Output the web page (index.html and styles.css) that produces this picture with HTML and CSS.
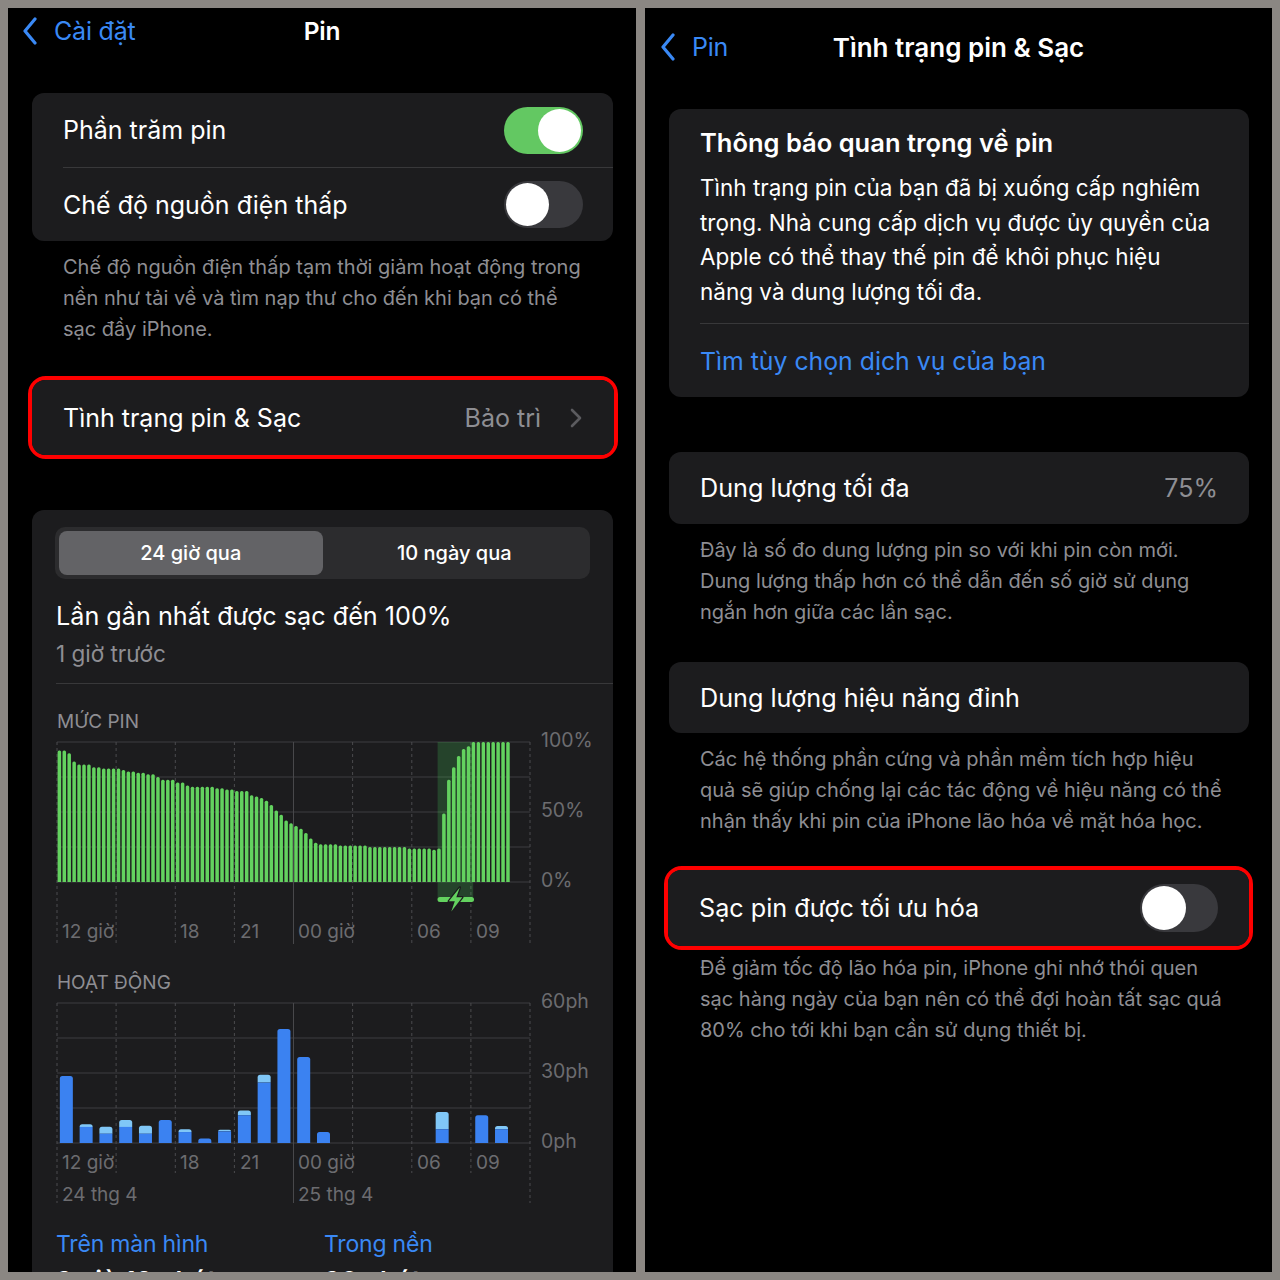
FILE: index.html
```html
<!DOCTYPE html>
<html lang="vi">
<head>
<meta charset="utf-8">
<title>Pin</title>
<link rel="stylesheet" href="styles.css">
</head>
<body>
<div class="frame">
  <section class="panel left">
    <header class="nav nav-left">
      <div class="back">
        <svg class="chev" viewBox="0 0 16 28" width="16" height="28"><path d="M13 2 L3 14 L13 26" /></svg>
        <span>Cài đặt</span>
      </div>
      <div class="title">Pin</div>
      <div></div>
    </header>

    <div class="card group1">
      <div class="row">
        <span class="label">Phần trăm pin</span>
        <span class="switch on"><span class="knob"></span></span>
      </div>
      <div class="sep inset"></div>
      <div class="row">
        <span class="label">Chế độ nguồn điện thấp</span>
        <span class="switch off"><span class="knob"></span></span>
      </div>
    </div>
    <p class="footer f-left">Chế độ nguồn điện thấp tạm thời giảm hoạt động trong<br>nền như tải về và tìm nạp thư cho đến khi bạn có thể<br>sạc đầy iPhone.</p>

    <div class="hl hl-left">
      <div class="card inner-card row link-row">
        <span class="label">Tình trạng pin &amp; Sạc</span>
        <span class="detail-wrap">
          <span class="detail">Bảo trì</span>
          <svg class="disclosure" viewBox="0 0 12 20" width="12" height="20"><path d="M2 2 L10 10 L2 18" /></svg>
        </span>
      </div>
    </div>

    <div class="card usage">
      <div class="seg">
        <div class="seg-item active">24 giờ qua</div>
        <div class="seg-item">10 ngày qua</div>
      </div>
      <div class="last">Lần gần nhất được sạc đến 100%</div>
      <div class="ago">1 giờ trước</div>
      <div class="sep usage-sep"></div>

      <div class="chart-title">MỨC PIN</div>
      <svg class="chart" id="level" width="581" height="219" viewBox="0 -7 581 219">
        <g class="hgrid">
          <line x1="25" y1="8" x2="498" y2="8"/>
          <line x1="25" y1="43" x2="498" y2="43"/>
          <line x1="25" y1="78" x2="498" y2="78"/>
          <line x1="25" y1="113" x2="498" y2="113"/>
          <line x1="25" y1="148" x2="498" y2="148"/>
        </g>
        <g class="vgrid">
          <line x1="25" y1="8" x2="25" y2="210"/>
          <line x1="84.1" y1="8" x2="84.1" y2="210"/>
          <line x1="143.3" y1="8" x2="143.3" y2="210"/>
          <line x1="202.4" y1="8" x2="202.4" y2="210"/>
          <line class="solid" x1="261.5" y1="8" x2="261.5" y2="210"/>
          <line x1="320.6" y1="8" x2="320.6" y2="210"/>
          <line x1="379.8" y1="8" x2="379.8" y2="210"/>
          <line x1="438.9" y1="8" x2="438.9" y2="210"/>
          <line x1="498" y1="8" x2="498" y2="210"/>
        </g>
        <rect class="shade" x="405.6" y="8" width="35.6" height="157"/>
        <g id="level-bars"></g>
        <g class="ylab">
          <text x="509" y="8">100%</text>
          <text x="509" y="78">50%</text>
          <text x="509" y="148">0%</text>
        </g>
        <g class="xlab">
          <text x="30" y="199">12 giờ</text>
          <text x="148" y="199">18</text>
          <text x="208" y="199">21</text>
          <text x="266" y="199">00 giờ</text>
          <text x="385" y="199">06</text>
          <text x="444" y="199">09</text>
        </g>
        <line class="pill" x1="408" y1="165.5" x2="439.5" y2="165.5"/>
        <path class="bolt" d="M427.8 153.5 L416.8 167.3 L422.8 167.3 L419.3 177.5 L430.3 163.3 L424.3 163.3 Z"/>
      </svg>

      <div class="chart-title act-title">HOẠT ĐỘNG</div>
      <svg class="chart" id="activity" width="581" height="219" viewBox="0 -7 581 219">
        <g class="hgrid">
          <line x1="25" y1="8" x2="498" y2="8"/>
          <line x1="25" y1="43" x2="498" y2="43"/>
          <line x1="25" y1="78" x2="498" y2="78"/>
          <line x1="25" y1="113" x2="498" y2="113"/>
          <line x1="25" y1="148" x2="498" y2="148"/>
        </g>
        <g class="vgrid">
          <line x1="25" y1="8" x2="25" y2="208"/>
          <line x1="84.1" y1="8" x2="84.1" y2="178"/>
          <line x1="143.3" y1="8" x2="143.3" y2="178"/>
          <line x1="202.4" y1="8" x2="202.4" y2="178"/>
          <line class="solid" x1="261.5" y1="8" x2="261.5" y2="208"/>
          <line x1="320.6" y1="8" x2="320.6" y2="178"/>
          <line x1="379.8" y1="8" x2="379.8" y2="178"/>
          <line x1="438.9" y1="8" x2="438.9" y2="178"/>
          <line x1="498" y1="8" x2="498" y2="208"/>
        </g>
        <g id="activity-bars"></g>
        <g class="ylab">
          <text x="509" y="8">60ph</text>
          <text x="509" y="78">30ph</text>
          <text x="509" y="148">0ph</text>
        </g>
        <g class="xlab">
          <text x="30" y="169">12 giờ</text>
          <text x="148" y="169">18</text>
          <text x="208" y="169">21</text>
          <text x="266" y="169">00 giờ</text>
          <text x="385" y="169">06</text>
          <text x="444" y="169">09</text>
          <text x="30" y="201">24 thg 4</text>
          <text x="266" y="201">25 thg 4</text>
        </g>
      </svg>

      <div class="totals">
        <div class="total">
          <div class="total-label">Trên màn hình</div>
          <div class="total-value">3 giờ 10 phút</div>
        </div>
        <div class="total">
          <div class="total-label">Trong nền</div>
          <div class="total-value">36 phút</div>
        </div>
      </div>
    </div>
  </section>

  <section class="panel right">
    <header class="nav nav-right">
      <div class="back">
        <svg class="chev" viewBox="0 0 16 28" width="16" height="28"><path d="M13 2 L3 14 L13 26" /></svg>
        <span>Pin</span>
      </div>
      <div class="title title-right">Tình trạng pin &amp; Sạc</div>
      <div></div>
    </header>

    <div class="card notice">
      <div class="notice-title">Thông báo quan trọng về pin</div>
      <p class="notice-body">Tình trạng pin của bạn đã bị xuống cấp nghiêm<br>trọng. Nhà cung cấp dịch vụ được ủy quyền của<br>Apple có thể thay thế pin để khôi phục hiệu<br>năng và dung lượng tối đa.</p>
      <div class="sep"></div>
      <div class="notice-link">Tìm tùy chọn dịch vụ của bạn</div>
    </div>

    <div class="card r-row cap-card">
      <span class="r-label">Dung lượng tối đa</span>
      <span class="value">75%</span>
    </div>
    <p class="footer f-right">Đây là số đo dung lượng pin so với khi pin còn mới.<br>Dung lượng thấp hơn có thể dẫn đến số giờ sử dụng<br>ngắn hơn giữa các lần sạc.</p>

    <div class="card r-row perf-card">
      <span class="r-label">Dung lượng hiệu năng đỉnh</span>
    </div>
    <p class="footer f-right">Các hệ thống phần cứng và phần mềm tích hợp hiệu<br>quả sẽ giúp chống lại các tác động về hiệu năng có thể<br>nhận thấy khi pin của iPhone lão hóa về mặt hóa học.</p>

    <div class="hl hl-right">
      <div class="card inner-card r-row opt-card">
        <span class="r-label">Sạc pin được tối ưu hóa</span>
        <span class="switch off small"><span class="knob"></span></span>
      </div>
    </div>
    <p class="footer f-right f-last">Để giảm tốc độ lão hóa pin, iPhone ghi nhớ thói quen<br>sạc hàng ngày của bạn nên có thể đợi hoàn tất sạc quá<br>80% cho tới khi bạn cần sử dụng thiết bị.</p>
  </section>
</div>
<script src="script.js"></script>
</body>
</html>
```

FILE: styles.css
```css
* {
  box-sizing: border-box;
  margin: 0;
  padding: 0;
}

body {
  background: #8b8783;
  font-family: Inter, "Noto Sans", "Liberation Sans", sans-serif;
  color: #fff;
}

.frame {
  display: flex;
  gap: 9px;
  padding: 8px;
  width: 1280px;
  height: 1280px;
}

.panel {
  background: #000;
  height: 1264px;
  overflow: hidden;
}

.left { width: 628px; }
.right { width: 627px; }

/* navigation */
.nav {
  display: grid;
  grid-template-columns: 1fr auto 1fr;
  align-items: center;
}
.nav-left { height: 46px; }
.nav-right { height: 78px; }

.back {
  display: flex;
  align-items: center;
  gap: 16px;
  color: #3a89f5;
  font-size: 25px;
  letter-spacing: -0.2px;
}
.nav-left .back { padding-left: 14px; }
.nav-right .back { padding-left: 15px; }

.chev path {
  fill: none;
  stroke: #3a89f5;
  stroke-width: 3.2;
  stroke-linecap: round;
  stroke-linejoin: round;
}

.title {
  font-size: 24.5px;
  font-weight: 600;
  letter-spacing: -0.2px;
}
.title-right {
  font-size: 26px;
  letter-spacing: 0;
}

/* cards & rows */
.card {
  background: #1c1c1e;
  border-radius: 12px;
  margin: 0 23px 0 24px;
}

.group1 { margin-top: 39px; }

.row {
  height: 74px;
  display: flex;
  align-items: center;
  justify-content: space-between;
  padding: 0 30px 0 31px;
}
.group1 .row:last-child { height: 73px; }

.label {
  font-size: 25px;
}

.sep {
  height: 1px;
  background: #38383a;
}
.sep.inset { margin-left: 31px; }

.switch {
  width: 79px;
  height: 47px;
  border-radius: 24px;
  padding: 2px;
  display: flex;
  flex: none;
}
.switch.on {
  background: #63c862;
  justify-content: flex-end;
}
.switch.off { background: #39393d; }
.switch.small {
  width: 78px;
  height: 48px;
}
.knob {
  width: 43px;
  height: 43px;
  border-radius: 50%;
  background: #fff;
}
.switch.small .knob {
  width: 44px;
  height: 44px;
}

.footer {
  color: #8e8e93;
  font-size: 20px;
  line-height: 31px;
}
.f-left { margin: 11px 24px 0 55px; }

/* highlighted rows */
.hl {
  border: 4px solid #ff0000;
  border-radius: 18px;
}
.hl-left { margin: 31px 18px 0 20px; }
.inner-card {
  margin: 0;
  border-radius: 13px;
}
.link-row {
  height: 75px;
  padding: 0 32px 0 31px;
}
.detail-wrap {
  display: flex;
  align-items: center;
  gap: 29px;
}
.detail {
  color: #8e8e93;
  font-size: 25px;
}
.disclosure path {
  fill: none;
  stroke: #5b5b5f;
  stroke-width: 2.6;
  stroke-linecap: round;
  stroke-linejoin: round;
}

/* usage card */
.usage {
  margin-top: 51px;
  padding: 17px 0 40px;
}
.seg {
  margin: 0 23px;
  height: 52px;
  background: #2c2c2e;
  border-radius: 10px;
  padding: 4px;
  display: flex;
}
.seg-item {
  flex: 1;
  display: flex;
  align-items: center;
  justify-content: center;
  font-size: 20px;
  font-weight: 500;
}
.seg-item.active {
  background: #636366;
  border-radius: 8px;
}
.last {
  margin: 20px 24px 0 24px;
  font-size: 25.2px;
  line-height: 34px;
}
.ago {
  margin: 6px 24px 0 24px;
  font-size: 22.5px;
  line-height: 30px;
  color: #8e8e93;
}
.usage-sep { margin: 14px 0 0 24px; }

.chart-title {
  margin: 33px 0 0 25px;
  font-size: 19px;
  line-height: 10px;
  color: #8e8e93;
}
.act-title { margin-top: 32px; }

.chart { display: block; }
.hgrid line {
  stroke: #3d3d40;
  stroke-width: 1;
}
.vgrid line {
  stroke: #4a4a4e;
  stroke-width: 1;
  stroke-dasharray: 3 3;
}
.vgrid line.solid {
  stroke-dasharray: none;
  stroke: #48484b;
}
.shade { fill: rgba(74, 210, 90, 0.22); }
.ylab text,
.xlab text {
  font-family: Inter, "Noto Sans", sans-serif;
  font-size: 19px;
  fill: #6c6c70;
  dominant-baseline: middle;
}
.ylab text { font-size: 19.5px; }
.bar-level { fill: #63d25f; }
.bar-dark { fill: #3b82f1; }
.bar-light { fill: #80c7f7; }
.pill {
  stroke: #63d25f;
  stroke-width: 5;
  stroke-linecap: round;
}
.bolt {
  fill: #63d25f;
  stroke: #1c1c1e;
  stroke-width: 2.5;
  paint-order: stroke fill;
  stroke-linejoin: round;
}

.totals {
  display: flex;
  margin: 22px 0 0 24px;
}
.total { width: 268px; }
.total-label {
  color: #3a89f5;
  font-size: 23px;
  line-height: 30px;
  letter-spacing: -0.2px;
}
.total-value {
  margin-top: 6px;
  font-size: 26px;
  font-weight: 600;
  line-height: 32px;
}

/* right panel */
.notice {
  margin-top: 23px;
  padding: 16px 0 0 31px;
}
.notice-title {
  font-size: 25.5px;
  font-weight: 600;
  line-height: 36px;
}
.notice-body {
  margin-top: 10px;
  font-size: 22.5px;
  line-height: 34.5px;
}
.notice .sep { margin-top: 14px; }
.notice-link {
  height: 73px;
  display: flex;
  align-items: center;
  color: #3a89f5;
  font-size: 24.8px;
}

.r-row {
  display: flex;
  align-items: center;
  justify-content: space-between;
  padding: 0 31px 0 31px;
}
.r-label { font-size: 25.2px; }
.value {
  color: #8e8e93;
  font-size: 25px;
}
.cap-card {
  margin-top: 55px;
  height: 72px;
}
.perf-card {
  margin-top: 34.5px;
  height: 71px;
}
.f-right { margin: 10.5px 24px 0 55px; }
.hl-right { margin: 29.5px 19px 0 19px; }
.opt-card { height: 76px; }
.f-last { margin-top: 2.5px; }
```

FILE: script.js
```js
(function () {
  var NS = 'http://www.w3.org/2000/svg';

  function rect(parent, x, y, w, h, cls, rx) {
    var r = document.createElementNS(NS, 'rect');
    r.setAttribute('x', x.toFixed(2));
    r.setAttribute('y', y.toFixed(2));
    r.setAttribute('width', w);
    r.setAttribute('height', h.toFixed(2));
    if (rx) { r.setAttribute('rx', rx); }
    r.setAttribute('class', cls);
    parent.appendChild(r);
  }

  function topRounded(parent, x, y, w, h, cls, r) {
    var p = document.createElementNS(NS, 'path');
    var rr = Math.min(r, h, w / 2);
    var d = 'M' + x + ' ' + (y + h) +
      ' L' + x + ' ' + (y + rr) +
      ' Q' + x + ' ' + y + ' ' + (x + rr) + ' ' + y +
      ' L' + (x + w - rr) + ' ' + y +
      ' Q' + (x + w) + ' ' + y + ' ' + (x + w) + ' ' + (y + rr) +
      ' L' + (x + w) + ' ' + (y + h) + ' Z';
    p.setAttribute('d', d);
    p.setAttribute('class', cls);
    parent.appendChild(p);
  }

  // battery level, 15 min steps
  var level = [
    94, 94, 92, 86, 84, 84, 84, 82, 82, 81, 81, 81, 81, 80, 79, 79, 78, 78, 77, 77,
    75, 73, 73, 73, 71, 71, 69, 68, 68, 68, 68, 68, 67, 67, 66, 66, 65, 65, 65, 62,
    61, 60, 58, 55, 51, 48, 44, 42, 40, 38, 35, 31, 28, 27, 27, 27, 27, 26, 26, 26,
    26, 26, 26, 25, 25, 25, 25, 25, 25, 25, 25, 24, 24, 24, 24, 24, 23, 24, 49, 73,
    82, 90, 95, 97, 100, 100, 100, 100, 100, 100, 100, 100
  ];
  var lg = document.getElementById('level-bars');
  level.forEach(function (v, i) {
    var h = v * 1.4;
    topRounded(lg, 25.6 + 4.93 * i, 148 - h, 3.5, h, 'bar-level', 1.5);
  });

  // activity per hour: [slot, total minutes, screen-on minutes]
  var act = [
    [0, 28.7, 28.7], [1, 8, 6.9], [2, 7, 4], [3, 9.9, 6.9], [4, 7.4, 4],
    [5, 9.9, 9.9], [6, 5.9, 4.7], [7, 1.9, 1.9], [8, 5.7, 5], [9, 13.9, 11.9],
    [10, 29.3, 25.9], [11, 48.9, 48.9], [12, 36.9, 36.9], [13, 4.7, 4.7],
    [19, 13.3, 5.9], [21, 11.9, 11.9], [22, 7.3, 5.9]
  ];
  var ag = document.getElementById('activity-bars');
  var k = 140 / 60;
  act.forEach(function (a) {
    var x = 27.85 + 19.78 * a[0];
    var total = a[1] * k;
    var dark = a[2] * k;
    if (total > dark) {
      topRounded(ag, x, 148 - total, 13, total - dark, 'bar-light', 2.5);
      rect(ag, x, 148 - dark, 13, dark, 'bar-dark');
    } else {
      topRounded(ag, x, 148 - dark, 13, dark, 'bar-dark', 2.5);
    }
  });
})();
```
